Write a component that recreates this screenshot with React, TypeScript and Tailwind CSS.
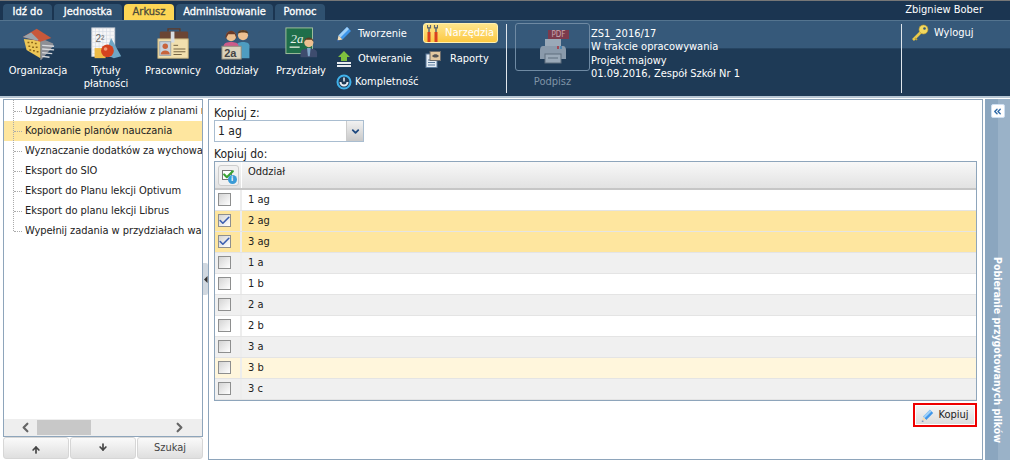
import React from 'react';
import { ChevronLeft, ChevronRight, ChevronsLeft, ChevronDown, ArrowUp, ArrowDown, Check } from 'lucide-react';

const tabs = [
  { label: 'Idź do', w: 'w-[49px]' },
  { label: 'Jednostka', w: 'w-[68px]' },
  { label: 'Arkusz', w: 'w-[50px]', active: true },
  { label: 'Administrowanie', w: 'w-[97px]' },
  { label: 'Pomoc', w: 'w-[50px]' },
];

const treeItems = [
  'Uzgadnianie przydziałów z planami nauczania',
  'Kopiowanie planów nauczania',
  'Wyznaczanie dodatków za wychowawstwo',
  'Eksport do SIO',
  'Eksport do Planu lekcji Optivum',
  'Eksport do planu lekcji Librus',
  'Wypełnij zadania w przydziałach warunkowych',
];

const rows = [
  { name: '1 ag', bg: 'bg-white' },
  { name: '2 ag', bg: 'bg-[#fee69f]', checked: true },
  { name: '3 ag', bg: 'bg-[#fee69f]', checked: true },
  { name: '1 a', bg: 'bg-[#f0f0f0]' },
  { name: '1 b', bg: 'bg-white' },
  { name: '2 a', bg: 'bg-[#f0f0f0]' },
  { name: '2 b', bg: 'bg-white' },
  { name: '3 a', bg: 'bg-[#f0f0f0]' },
  { name: '3 b', bg: 'bg-[#fff6dc]' },
  { name: '3 c', bg: 'bg-[#f0f0f0]' },
];

const OrgIcon = () => (
  <svg width="33" height="33" viewBox="0 0 36 36">
    <path d="M20 12l14 6v3l-14 16z" fill="#8d8f96" />
    <path d="M22 20l13 1M22 24l13 1M22 28l11 1M22 32l8 1" stroke="#d8dade" strokeWidth="1.4" />
    <path d="M2 13l18 2v19L5 25z" fill="#eec757" />
    <path d="M1 11L16 2l16 10-12 4z" fill="#c9583a" />
    <path d="M1 11l9-5 8 8-1 1z" fill="#9aa5ad" />
    <path d="M6 17h2M10 17h2M14 18h2M7 21h2M11 22h2M15 22h2M8 25h2M12 26h2M16 27h2" stroke="#8a6418" strokeWidth="1.6" />
  </svg>
);

const TytulyIcon = () => (
  <svg width="33" height="33" viewBox="0 0 36 36">
    <rect x="2" y="1" width="25" height="31" fill="#f7f7f7" stroke="#c8ccd4" />
    <path d="M6 1v31M10 1v31M14 1v31M18 1v31M22 1v31M2 5h25M2 9h25M2 13h25M2 17h25M2 21h25M2 25h25M2 29h25" stroke="#d5dbe6" strokeWidth="0.7" />
    <text x="6" y="16" fontSize="11" fill="#666" fontFamily="Liberation Sans, sans-serif">2²</text>
    <path d="M23 12l11 20-8 2-9-4z" fill="#6fa6c4" />
    <rect x="5" y="23" width="12" height="11" fill="#eebb46" />
    <circle cx="19" cy="26" r="7" fill="#d4431f" />
    <circle cx="17" cy="24" r="2" fill="#f09a78" />
  </svg>
);

const PracIcon = () => (
  <svg width="33" height="33" viewBox="0 0 36 36">
    <path d="M12 5V2h13v3" fill="none" stroke="#5d3a2a" strokeWidth="1.5" />
    <rect x="3" y="5" width="31" height="13" rx="1.5" fill="#6b4534" />
    <rect x="1" y="13" width="33" height="21" fill="#f1dfae" stroke="#c9b27c" />
    <rect x="15" y="5" width="4" height="12" fill="#d8dde2" />
    <rect x="3" y="16" width="12" height="15" fill="#c7d2dc" stroke="#9aa5ad" />
    <circle cx="9" cy="21" r="3" fill="#c8643c" />
    <path d="M4 30c0-6 10-6 10 0z" fill="#c8643c" />
    <path d="M18 20h5M18 24h13M18 27h13M18 30h9" stroke="#6b5a3a" />
  </svg>
);

const OddzialyIcon = () => (
  <svg width="33" height="33" viewBox="0 0 36 36">
    <circle cx="24" cy="9" r="5.5" fill="#eec090" />
    <path d="M18 7c1-5 11-5 12 0l-4-1-4 0z" fill="#5a3d22" />
    <path d="M17 34V20c0-5 14-5 14 0v14z" fill="#4e9cc0" />
    <circle cx="11" cy="10" r="5.5" fill="#eec090" />
    <path d="M5 13c-1-12 13-12 12 0l-2-5-7 0z" fill="#6a3b2a" />
    <path d="M3 27v-7c0-5 16-5 16 0v7z" fill="#cc5a8a" />
    <rect x="1" y="21" width="21" height="14" fill="#d9d2bc" stroke="#8d8878" />
    <text x="3.5" y="33" fontSize="12" fontWeight="bold" fill="#444" fontFamily="Liberation Sans, sans-serif">2a</text>
  </svg>
);

const PrzydzialyIcon = () => (
  <svg width="33" height="33" viewBox="0 0 36 36">
    <rect x="1" y="1" width="29" height="28" fill="#1f6e4a" stroke="#a8c4a0" />
    <text x="6" y="17" fontSize="14" fontStyle="italic" fill="#e8f2ea" fontFamily="Liberation Serif, serif">2a</text>
    <path d="M5 22h11" stroke="#dfe8d8" strokeWidth="1.5" />
    <circle cx="26" cy="17" r="5" fill="#eec090" />
    <path d="M21 16c0-6 10-6 10 0l-2-2h-6z" fill="#5a3d22" />
    <path d="M17 33v-5c0-6 18-6 18 0v5z" fill="#3e4c6e" />
    <path d="M24 23h4l-1 9h-2z" fill="#7ea6c8" />
  </svg>
);

const PencilIcon = ({ size = 16 }: { size?: number }) => (
  <svg width={size} height={size} viewBox="0 0 16 16">
    <path d="M11 1l4 4-8.5 8.5-4-4z" fill="#3f96ea" />
    <path d="M11 1l2 2-8.5 8.5-2-2z" fill="#9fd0f8" />
    <path d="M2.5 9.5l4 4-5 1z" fill="#f2dcb8" />
    <path d="M1 15h2" stroke="#2f5fa8" strokeWidth="1" />
  </svg>
);

const UpIcon = () => (
  <svg width="16" height="16" viewBox="0 0 16 16">
    <path d="M8 0l6 6h-3v4H5V6H2z" fill="#7fc23e" />
    <rect x="1" y="11" width="14" height="2" fill="#e8ecef" />
    <rect x="1" y="14" width="14" height="2" fill="#e8ecef" />
  </svg>
);

const GaugeIcon = () => (
  <svg width="16" height="16" viewBox="0 0 16 16">
    <circle cx="8" cy="8" r="6.5" fill="none" stroke="#3fb1ea" strokeWidth="2" />
    <path d="M4.5 8a3.5 3.5 0 0 0 7 0" fill="none" stroke="#e8eef4" strokeWidth="2" />
    <path d="M8 3.5v4" stroke="#e8eef4" strokeWidth="1.5" />
  </svg>
);

const ToolsIcon = () => (
  <svg width="11" height="17" viewBox="0 0 11 17">
    <rect x="0.5" y="7" width="3" height="10" fill="#d8401f" />
    <rect x="7.5" y="7" width="3" height="10" fill="#d8401f" />
    <path d="M2 7V2M9 7V2" stroke="#5d6670" strokeWidth="1.5" />
    <path d="M0.5 0v3h3V0M7.5 0v3h3V0" fill="none" stroke="#5d6670" strokeWidth="1.2" />
  </svg>
);

const ReportIcon = () => (
  <svg width="16" height="17" viewBox="0 0 16 17">
    <rect x="1" y="3" width="11" height="13.5" fill="#e4ecf4" stroke="#5c7b9c" />
    <path d="M3 9h7M3 11.5h7M3 14h7" stroke="#5c7b9c" />
    <rect x="5" y="0.5" width="10.5" height="9" fill="#e2c8a0" stroke="#6c6c6c" />
    <path d="M7 5c2-2.5 5-2.5 7 0-2 2-5 2-7 0z" fill="#555" />
  </svg>
);

const PrinterIcon = () => (
  <svg width="30" height="34" viewBox="0 0 30 34">
    <rect x="7" y="9" width="16" height="10" fill="#9aa9b8" />
    <path d="M2 20c0-2 1-4 3-4h20c2 0 3 2 3 4v9H2z" fill="#8a9aab" />
    <rect x="7" y="24" width="16" height="9" fill="#9aa9b8" stroke="#5f6e7e" />
    <path d="M10 28h10" stroke="#5f6e7e" />
    <rect x="19" y="16" width="2" height="3" fill="#a14a58" />
    <rect x="22" y="16" width="2" height="3" fill="#4f86b0" />
  </svg>
);

const KeyIcon = () => (
  <svg width="18" height="18" viewBox="0 0 18 18">
    <path d="M10 8L2 16" stroke="#e8c94a" strokeWidth="2.6" />
    <path d="M4 14l2 2" stroke="#c7a52e" strokeWidth="1.6" />
    <circle cx="12.5" cy="5.5" r="4.5" fill="#f2d85e" stroke="#b8962a" strokeWidth="0.6" />
    <circle cx="13.5" cy="4.5" r="1.3" fill="#36597a" />
  </svg>
);

const BigButton = ({ w, icon, label, second }: { w: string; icon: React.ReactNode; label: string; second?: string }) => (
  <div className={`${w} flex shrink-0 flex-col items-center pt-[6px]`}>
    <div className="flex h-[33px] items-center justify-center">{icon}</div>
    <div className="mt-[4px] text-center leading-[13px] text-white">
      <div>{label}</div>
      {second && <div>{second}</div>}
    </div>
  </div>
);

const SmallButton = ({ icon, label, gap }: { icon: React.ReactNode; label: string; gap: string }) => (
  <div className={`flex h-[20px] items-center ${gap} text-white`}>
    {icon}
    <span>{label}</span>
  </div>
);

const Checkbox = ({ checked }: { checked?: boolean }) => (
  <div className="relative h-[13px] w-[13px] border border-[#8e8f8f] bg-gradient-to-br from-[#d4d4d4] to-white">
    {checked && <Check className="absolute -left-[1px] -top-[1px] h-[13px] w-[13px] text-[#3c5fb0]" strokeWidth={3} />}
  </div>
);

const App = () => {
  return (
    <div className="flex h-[460px] w-[1010px] flex-col overflow-hidden bg-white text-[11px] text-[#222] [font-family:'DejaVu_Sans_Condensed','DejaVu_Sans',sans-serif]">
      {/* top bar */}
      <div className="flex h-[20px] shrink-0 items-end gap-[2px] border-t border-[#777] bg-[#1b3551] pl-[3px]">
        {tabs.map((t) => (
          <div
            key={t.label}
            className={`${t.w} flex h-[16px] items-center justify-center rounded-t-[4px] [-webkit-text-stroke:0.3px] ${t.active ? 'bg-[#fdd655] text-[#4a4a3a]' : 'bg-[#2f5170] text-white'}`}
          >
            {t.label}
          </div>
        ))}
        <div className="ml-auto self-center pr-[27px] text-white">Zbigniew Bober</div>
      </div>

      {/* ribbon */}
      <div className="flex h-[76px] shrink-0 border-t border-[#54748f] bg-[linear-gradient(#36597a_0,#36597a_36%,#1e3a56_37%,#1e3a56_100%)] pl-[4px]">
        <BigButton w="w-[68px]" icon={<OrgIcon />} label="Organizacja" />
        <BigButton w="w-[68px]" icon={<TytulyIcon />} label="Tytuły" second="płatności" />
        <BigButton w="w-[66px]" icon={<PracIcon />} label="Pracownicy" />
        <BigButton w="w-[62px]" icon={<OddzialyIcon />} label="Oddziały" />
        <BigButton w="w-[66px]" icon={<PrzydzialyIcon />} label="Przydziały" />
        <div className="flex w-[89px] shrink-0 flex-col pt-[3px] pl-[2px]">
          <SmallButton icon={<PencilIcon />} label="Tworzenie" gap="gap-[6px]" />
          <div className="mt-[5px]">
            <SmallButton icon={<UpIcon />} label="Otwieranie" gap="gap-[6px]" />
          </div>
          <div className="mt-[3px]">
            <SmallButton icon={<GaugeIcon />} label="Kompletność" gap="gap-[3px]" />
          </div>
        </div>
        <div className="flex w-[75px] shrink-0 flex-col gap-[6px] pt-[2px]">
          <div className="flex h-[20px] items-center gap-[7px] rounded-[3px] border border-[#fff0b0] bg-gradient-to-b from-[#fde58a] to-[#fcc93f] pl-[3px] text-white">
            <ToolsIcon />
            <span className="mt-[1px]">Narzędzia</span>
          </div>
          <div className="flex h-[20px] items-center gap-[9px] pl-[2px] text-white">
            <ReportIcon />
            <span>Raporty</span>
          </div>
        </div>
        <div className="mx-[8px] my-[3px] w-[1px] shrink-0 bg-[#dfe6ec]" />
        <div className="flex w-[75px] shrink-0 flex-col items-center pt-[2px]">
          <div className="relative flex h-[48px] w-[75px] items-center justify-center rounded-[3px] border border-[#6f8aa3]">
            <PrinterIcon />
            <div className="absolute left-[32px] top-[6px] flex h-[9px] w-[21px] items-center justify-center bg-[#7c3a4c] text-[8px] leading-none text-[#c7a6ae]">PDF</div>
          </div>
          <div className="mt-[3px] text-[#7f93a6]">Podpisz</div>
        </div>
        <div className="w-[311px] shrink-0 pl-[1px] pt-[6px] leading-[13.4px] text-white">
          <div>ZS1_2016/17</div>
          <div>W trakcie opracowywania</div>
          <div>Projekt majowy</div>
          <div>01.09.2016, Zespół Szkół Nr 1</div>
        </div>
        <div className="my-[3px] w-[1px] shrink-0 bg-[#dfe6ec]" />
        <div className="flex h-[24px] items-center gap-[5px] pl-[9px] text-white">
          <KeyIcon />
          <span>Wyloguj</span>
        </div>
      </div>
      <div className="h-[2px] shrink-0 bg-[#b6c6d4]" />

      {/* body */}
      <div className="flex min-h-0 flex-1 pl-[3px] pt-[1px]">
        {/* left column */}
        <div className="flex w-[200px] shrink-0 flex-col">
          <div className="relative flex h-[338px] flex-col overflow-hidden border border-[#8ea5bb] bg-white">
            <div className="absolute left-[9px] top-0 h-[131px] border-l border-dotted border-[#aaa]" />
            <div className="flex-1 pt-[1px]">
              {treeItems.map((item, i) => (
                <div key={item} className={`flex h-[20px] items-center whitespace-nowrap tracking-[-0.05px] ${i === 1 ? 'bg-[#fee69f]' : ''}`}>
                  <div className="ml-[10px] mr-[3px] w-[8px] shrink-0 border-t border-dotted border-[#aaa]" />
                  <span>{item}</span>
                </div>
              ))}
            </div>
            <div className="flex h-[17px] shrink-0 items-center bg-[#eeeeee] pl-[14px]">
              <ChevronLeft className="h-[15px] w-[15px] text-[#666]" strokeWidth={3.5} />
              <div className="ml-[4px] h-[15px] w-[54px] bg-[#c8c8c8]" />
              <ChevronRight className="ml-[81px] h-[15px] w-[15px] text-[#666]" strokeWidth={3.5} />
            </div>
          </div>
          <div className="flex h-[22px] gap-[1px]">
            {[<ArrowUp key="u" className="mt-[4px] h-[10px] w-[10px]" strokeWidth={4} />, <ArrowDown key="d" className="-mt-[3px] h-[10px] w-[10px]" strokeWidth={4} />, 'Szukaj'].map((c, i) => (
              <div key={i} className="flex h-[22px] flex-1 items-center justify-center rounded-[3px] border border-[#d6d6d6] bg-gradient-to-b from-[#fafafa] to-[#dfdfdf] text-[#444]">
                {c}
              </div>
            ))}
          </div>
        </div>

        {/* splitter */}
        <div className="w-[5px] shrink-0 pt-[164px]">
          <div className="flex h-[32px] w-[5px] items-center justify-center rounded-r-[2px] bg-[#d0d8e0]">
            <svg width="4" height="7" viewBox="0 0 4 7">
              <path d="M3.5 0v7L0 3.5z" fill="#333" />
            </svg>
          </div>
        </div>

        {/* main panel */}
        <div className="flex w-[775px] shrink-0 flex-col border border-[#8ea5bb] bg-white pl-[5px] pr-[5px]">
          <div className="mt-[6px] leading-[14px] text-[12px]">Kopiuj z:</div>
          <div className="flex h-[22px] w-[150px] items-stretch border border-[#a9bdd0]">
            <div className="flex-1 pl-[3px] text-[12px] leading-[20px]">1 ag</div>
            <div className="flex w-[17px] items-center justify-center border-l border-[#ccc] bg-gradient-to-b from-[#f2f2f2] to-[#c9c9c9]">
              <ChevronDown className="h-[11px] w-[11px] text-[#1f4a80]" strokeWidth={4} />
            </div>
          </div>
          <div className="mt-[5px] leading-[14px] text-[12px]">Kopiuj do:</div>
          <div className="border border-[#8ea5bb]">
            <div className="flex h-[28px] border-b-2 border-[#c6c6c6] bg-gradient-to-b from-[#f8f8f8] to-[#e2e2e2]">
              <div className="flex w-[27px] shrink-0 items-center justify-center border-r border-white">
                <div className="relative h-[21px] w-[21px] rounded-[3px] border border-[#ccc] bg-[#f0f0f0]">
                  <div className="absolute left-[3px] top-[4px] h-[10px] w-[10px] border border-[#777] bg-white" />
                  <Check className="absolute left-[3px] top-[2px] h-[13px] w-[13px] text-[#3aa335]" strokeWidth={4} />
                  <div className="absolute bottom-[1px] right-[1px] flex h-[9px] w-[9px] items-center justify-center rounded-full bg-[#3b9bd6] text-[7px] font-bold leading-none text-white">i</div>
                </div>
              </div>
              <div className="pl-[6px] pt-[3px] leading-[14px]">Oddział</div>
            </div>
            {rows.map((r) => (
              <div key={r.name} className={`flex h-[21px] border-b border-[#e4e4e4] ${r.bg}`}>
                <div className="flex w-[27px] shrink-0 items-center border-r-2 border-[#ededed] pb-[1px] pl-[3px]">
                  <Checkbox checked={r.checked} />
                </div>
                <div className="flex items-center pl-[6px] pt-[1px]">{r.name}</div>
              </div>
            ))}
          </div>
          <div className="mt-[2px] flex justify-end">
            <div className="flex h-[24px] w-[64px] items-center justify-center border-2 border-[#ee0000] p-[1px]">
              <div className="flex h-full w-full items-center justify-center gap-[4px] bg-gradient-to-b from-[#f4f4f4] to-[#dcdcdc] text-[#222]">
                <PencilIcon size={13} />
                <span>Kopiuj</span>
              </div>
            </div>
          </div>
        </div>

        {/* right sidebar */}
        <div className="ml-[2px] flex min-w-0 flex-1 flex-col items-center bg-[linear-gradient(90deg,#8ba6bf_0,#8ba6bf_50%,#9ab2c8_50%)] pt-[5px]">
          <div className="flex h-[14px] w-[14px] items-center justify-center rounded-[2px] border border-[#cfe0f2] bg-white">
            <ChevronsLeft className="h-[11px] w-[11px] text-[#2f6aa8]" strokeWidth={3} />
          </div>
          <div className="mt-[139px] whitespace-nowrap text-[10.5px] font-bold text-white [writing-mode:vertical-rl]">Pobieranie przygotowanych plików</div>
        </div>
      </div>
    </div>
  );
};

export default App;
